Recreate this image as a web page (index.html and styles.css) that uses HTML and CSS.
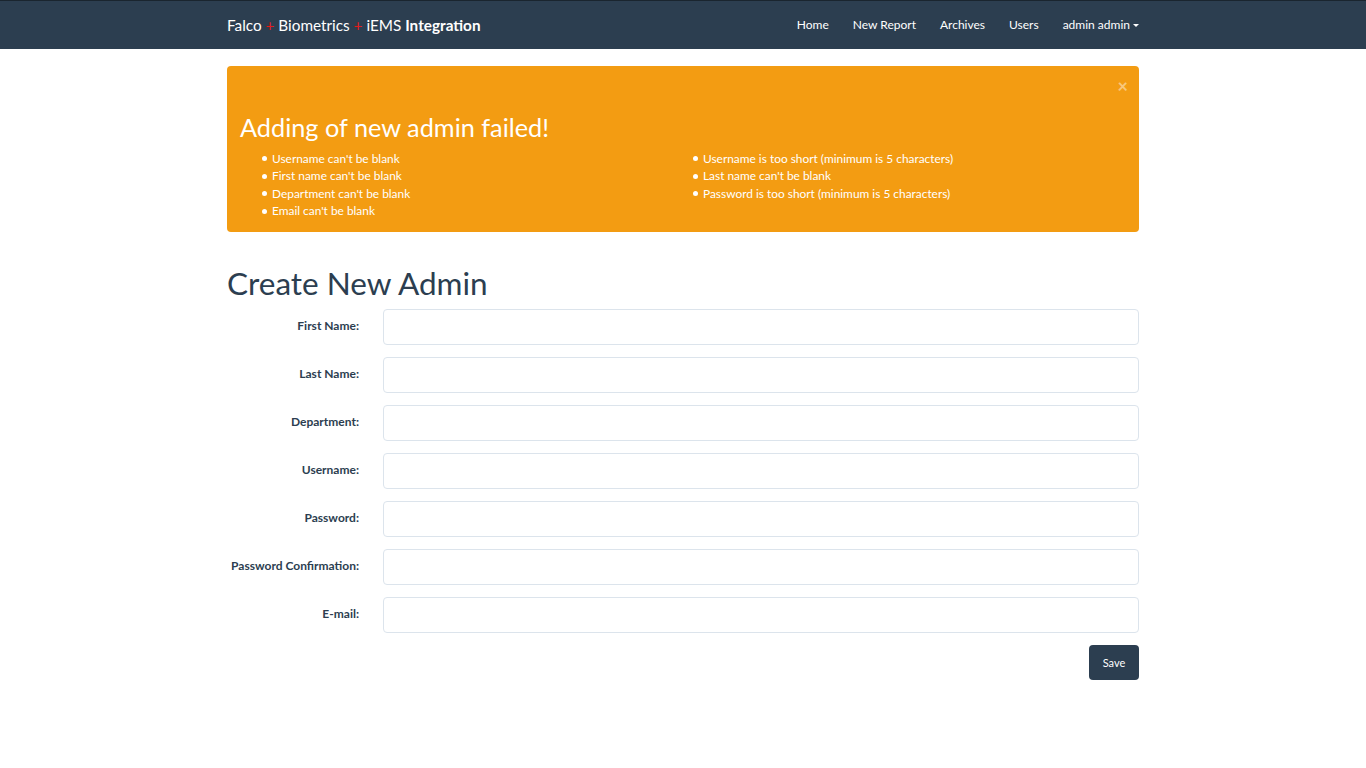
FILE: index.html
```html
<!DOCTYPE html>
<html>
<head>
<meta charset="utf-8">
<title>Create New Admin</title>
<link rel="stylesheet" href="styles.css">
</head>
<body>
<header class="navbar">
  <div class="container nav-inner">
    <a class="brand" href="#">Falco <span class="plus">+</span> Biometrics <span class="plus">+</span> iEMS <b>Integration</b></a>
    <nav class="nav-links">
      <a href="#">Home</a>
      <a href="#">New Report</a>
      <a href="#">Archives</a>
      <a href="#">Users</a>
      <a href="#" class="dropdown">admin admin<span class="caret"></span></a>
    </nav>
  </div>
</header>
<main class="container">
  <div class="alert">
    <button class="close" type="button">×</button>
    <h4 class="alert-title">Adding of new admin failed!</h4>
    <div class="alert-cols">
      <ul>
        <li>Username can't be blank</li>
        <li>First name can't be blank</li>
        <li>Department can't be blank</li>
        <li>Email can't be blank</li>
      </ul>
      <ul>
        <li>Username is too short (minimum is 5 characters)</li>
        <li>Last name can't be blank</li>
        <li>Password is too short (minimum is 5 characters)</li>
      </ul>
    </div>
  </div>
  <h1 class="page-title">Create New Admin</h1>
  <form class="form">
    <div class="row"><label>First Name:</label><input type="text"></div>
    <div class="row"><label>Last Name:</label><input type="text"></div>
    <div class="row"><label>Department:</label><input type="text"></div>
    <div class="row"><label>Username:</label><input type="text"></div>
    <div class="row"><label>Password:</label><input type="password"></div>
    <div class="row"><label>Password Confirmation:</label><input type="password"></div>
    <div class="row"><label>E-mail:</label><input type="text"></div>
    <div class="actions"><button type="button" class="btn">Save</button></div>
  </form>
</main>
</body>
</html>
```
FILE: styles.css
```css
* { box-sizing: border-box; }
body {
  margin: 0;
  font-family: Lato, "Open Sans", sans-serif;
  color: #2c3e50;
  background: #fff;
  font-size: 13px;
}
.container {
  width: 912px;
  margin: 0 auto;
}
.navbar {
  background: #2c3e50;
  border-top: 1px solid #1a252f;
  height: 49px;
}
.nav-inner {
  display: flex;
  align-items: center;
  justify-content: space-between;
  height: 47px;
}
.brand {
  color: #fff;
  text-decoration: none;
  font-size: 15.3px;
}
.brand b { font-weight: 700; }
.plus { color: #e21b1b; }
.nav-links {
  display: flex;
  gap: 24px;
}
.nav-links a {
  color: #fff;
  text-decoration: none;
  font-size: 12px;
}
.caret {
  display: inline-block;
  width: 0;
  height: 0;
  margin-left: 3px;
  vertical-align: middle;
  border-top: 3.5px solid #fff;
  border-left: 3.5px solid transparent;
  border-right: 3.5px solid transparent;
}
.alert {
  position: relative;
  margin-top: 17px;
  background: #f39c12;
  border-radius: 4px;
  color: #fff;
  padding: 48px 13px 13px;
}
.close {
  position: absolute;
  top: 11px;
  right: 11px;
  background: none;
  border: 0;
  color: #fff;
  opacity: 0.45;
  font-size: 18px;
  font-weight: 700;
  line-height: 1;
  padding: 0;
  font-family: Lato, sans-serif;
}
.alert-title {
  margin: 0 0 8px;
  font-size: 25.3px;
  font-weight: 400;
  line-height: 1.1;
}
.alert-cols {
  display: grid;
  grid-template-columns: 431px 1fr;
}
.alert-cols ul {
  margin: 0;
  padding-left: 32px;
  list-style: none;
  font-size: 11.9px;
  line-height: 17.4px;
}
.alert-cols li {
  position: relative;
}
.alert-cols li::before {
  content: "";
  position: absolute;
  left: -10px;
  top: 6.5px;
  width: 5px;
  height: 5px;
  border-radius: 50%;
  background: #fff;
}
.page-title {
  margin: 34px 0 8px;
  font-size: 31.5px;
  font-weight: 400;
  line-height: 1.1;
}
.form {
  display: flex;
  flex-direction: column;
  gap: 12px;
}
.row {
  display: grid;
  grid-template-columns: 132px 1fr;
  column-gap: 24px;
  align-items: center;
}
.row label {
  text-align: right;
  font-weight: 700;
  font-size: 12px;
  margin-top: -4px;
}
.row input {
  height: 36px;
  border: 1px solid #dce4ec;
  border-radius: 4px;
  padding: 6px 12px;
  font-family: inherit;
  font-size: 13px;
  color: #2c3e50;
  outline: none;
}
.actions {
  display: flex;
  justify-content: flex-end;
}
.btn {
  background: #2c3e50;
  color: #fff;
  border: 0;
  border-radius: 4px;
  width: 50px;
  height: 35px;
  font-family: inherit;
  font-size: 11px;
  padding: 0;
}
```
